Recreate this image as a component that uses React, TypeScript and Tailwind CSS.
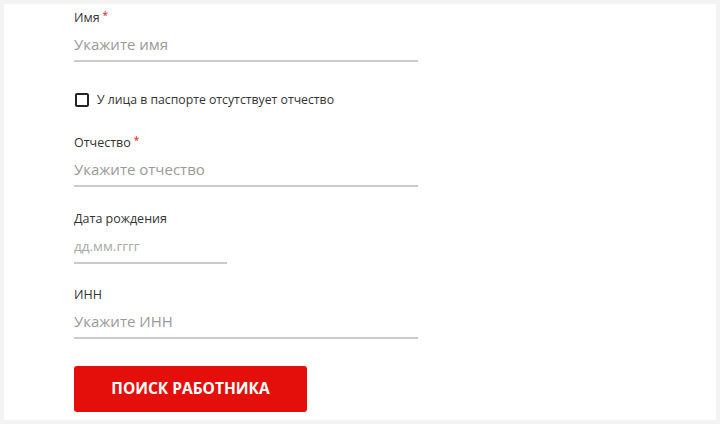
export default function App() {
  return (
    <div className="w-[720px] h-[424px] bg-[#f3f3f3] p-[4px] font-['Open_Sans',sans-serif]">
      <div className="h-[416px] bg-white pl-[70px] pt-[6px]">
        <Field label="Имя" required placeholder="Укажите имя" />

        <label className="mt-[30px] flex h-[16px] items-center gap-[8px] pl-[1px]">
          <span className="h-[14px] w-[14px] rounded-[2px] border-2 border-[#222]" />
          <span className="text-[12.25px] text-[#333]">У лица в паспорте отсутствует отчество</span>
        </label>

        <div className="mt-[27px]">
          <Field label="Отчество" required placeholder="Укажите отчество" />
        </div>
        <div className="mt-[24px]">
          <Field label="Дата рождения" placeholder="дд.мм.гггг" narrow />
        </div>
        <div className="mt-[23px]">
          <Field label="ИНН" placeholder="Укажите ИНН" />
        </div>

        <button className="mt-[27px] flex h-[46px] w-[233px] items-center justify-center rounded-[3px] bg-[#e40f0b] text-[15.5px] font-bold text-white">
          ПОИСК РАБОТНИКА
        </button>
      </div>
    </div>
  );
}

function Field({
  label,
  placeholder,
  required,
  narrow,
}: {
  label: string;
  placeholder: string;
  required?: boolean;
  narrow?: boolean;
}) {
  return (
    <div>
      <div className="flex h-[16px] items-start text-[12.5px] leading-[16px] text-[#333]">
        {label}
        {required && <span className="ml-[3px] text-[10px] leading-[10px] text-[#e40f0b]">*</span>}
      </div>
      <div
        className={`border-b-2 border-[#cbcbcb] pb-[6px] ${narrow ? 'w-[153px] pt-[9px]' : 'w-[344px] pt-[8px]'}`}
      >
        <span
          className={`block leading-[20px] ${narrow ? 'text-[13.5px] text-[#a8a8a8]' : 'text-[15px] text-[#9a9a9a]'}`}
        >
          {placeholder}
        </span>
      </div>
    </div>
  );
}
